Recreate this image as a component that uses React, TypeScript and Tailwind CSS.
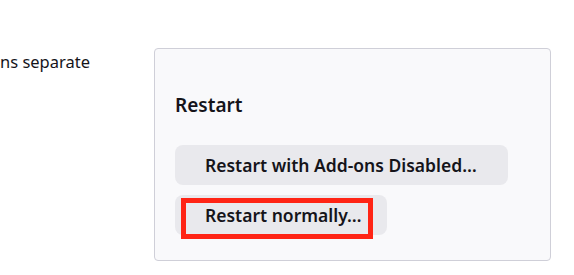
export default function App() {
  return (
    <div
      className="w-[574px] h-[275px] bg-white flex overflow-hidden text-[#15141a]"
      style={{ fontFamily: '"Noto Sans", "Open Sans", sans-serif' }}
    >
      <div className="w-[154px] shrink-0 pt-[50px] text-[16.5px] leading-[24px] whitespace-nowrap">
        ns separate
      </div>
      <div className="mt-[48px] w-[397px] h-[213px] shrink-0 border border-[#cfcfd8] rounded-[4px] bg-[#f9f9fb] pl-[20px] pt-[43px]">
        <h2 className="text-[19px] leading-[26px] font-semibold">Restart</h2>
        <div className="mt-[27px] flex flex-col items-start gap-[10px]">
          <button className="h-[40px] w-[333px] rounded-[8px] bg-[#e9e9ed] pl-[30px] pt-[1px] text-left text-[17.5px] font-semibold">
            Restart with Add-ons Disabled…
          </button>
          <div className="relative">
            <button className="h-[40px] w-[212px] rounded-[8px] bg-[#e9e9ed] pl-[30px] pt-[1px] text-left text-[17.5px] font-semibold">
              Restart normally…
            </button>
            <div className="absolute left-[6px] top-[3px] w-[192px] h-[41px] border-[5px] border-[#ff2415]" />
          </div>
        </div>
      </div>
    </div>
  );
}
